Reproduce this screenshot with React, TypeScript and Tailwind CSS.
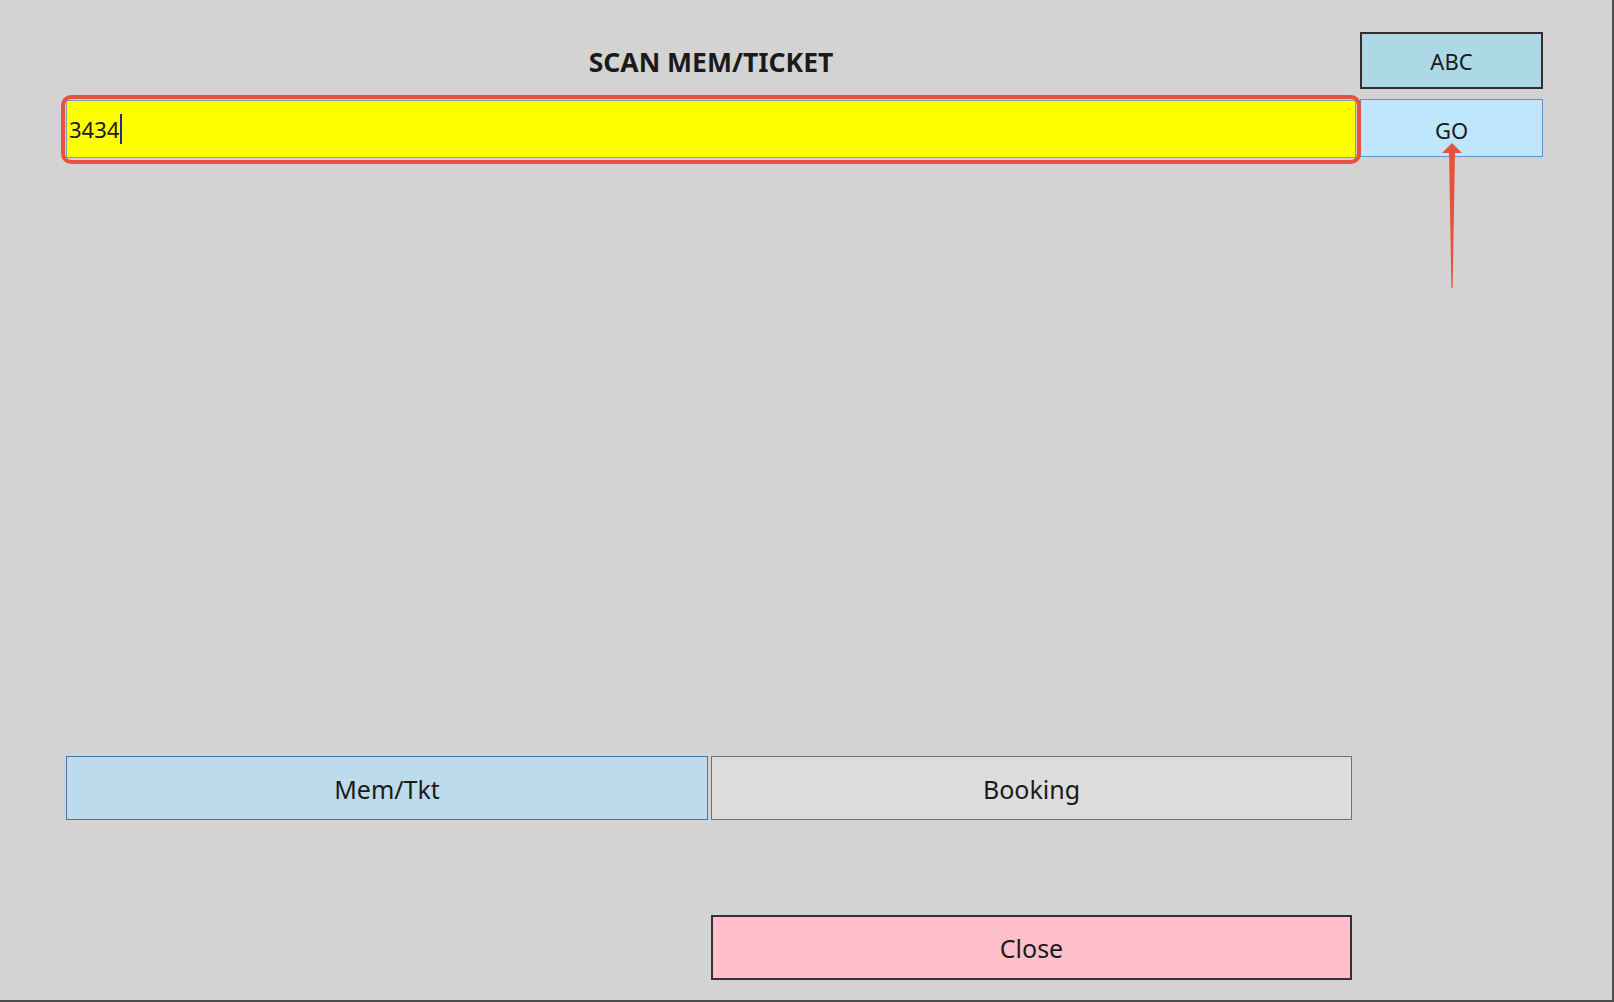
export default function App() {
  return (
    <div className="relative w-[1614px] h-[1002px] bg-[#d3d3d3] border-r-2 border-b-2 border-[#4d4d4d] font-['Noto_Sans','Open_Sans',sans-serif] text-[#1a1a1a] pl-[66px] pt-[32px] flex flex-col">
      {/* header row */}
      <div className="flex gap-[4px] h-[57px]">
        <div className="w-[1290px] flex items-center justify-center pt-[5px]">
          <h1 className="text-[26.5px] font-bold">SCAN MEM/TICKET</h1>
        </div>
        <button className="w-[183px] h-[57px] bg-[#add8e6] border-2 border-[#2e2e2e] text-[22px] flex items-center justify-center pt-[2px]">
          ABC
        </button>
      </div>

      {/* input row */}
      <div className="flex gap-[4px] mt-[10px] h-[58px]">
        <div className="relative w-[1290px] h-[58px] mt-[1px]">
          <div className="h-full bg-[#ffff00] border border-[#7f9db9] flex items-center pl-[2px] text-[22px]">
            <span>3434</span>
            <span className="w-[2px] h-[30px] bg-[#2a2a8a] ml-[1px]" />
          </div>
          {/* annotation outline */}
          <div className="absolute -top-[5px] -left-[5px] -right-[5px] -bottom-[6px] border-[4px] border-[#e5533d] rounded-[10px] pointer-events-none" />
        </div>
        <button className="w-[183px] h-[58px] bg-[#bee6fd] border border-[#5e95cc] text-[22px] flex items-center justify-center pt-[4px]">
          GO
        </button>
      </div>

      {/* mode buttons */}
      <div className="flex gap-[3px] mt-[599px] h-[64px]">
        <button className="w-[642px] h-full bg-[#bcdcee] border border-[#4a76a0] text-[25px] flex items-center justify-center pt-[3px]">
          Mem/Tkt
        </button>
        <button className="w-[641px] h-full bg-[#dddddd] border border-[#707070] text-[25px] flex items-center justify-center pt-[3px]">
          Booking
        </button>
      </div>

      <div className="flex mt-[95px] h-[65px]">
        <button className="ml-[645px] w-[641px] h-full bg-[#ffc0cb] border-2 border-[#333333] text-[25px] flex items-center justify-center pt-[2px]">
          Close
        </button>
      </div>

      {/* annotation arrow */}
      <svg className="absolute left-[1440px] top-[142px] pointer-events-none" width="24" height="150" viewBox="0 0 24 150">
        <polygon points="12,1 22,11 2,11" fill="#e5533d" />
        <polygon points="9,10 15,10 12.6,146 11.4,146" fill="#e5533d" />
      </svg>
    </div>
  );
}
